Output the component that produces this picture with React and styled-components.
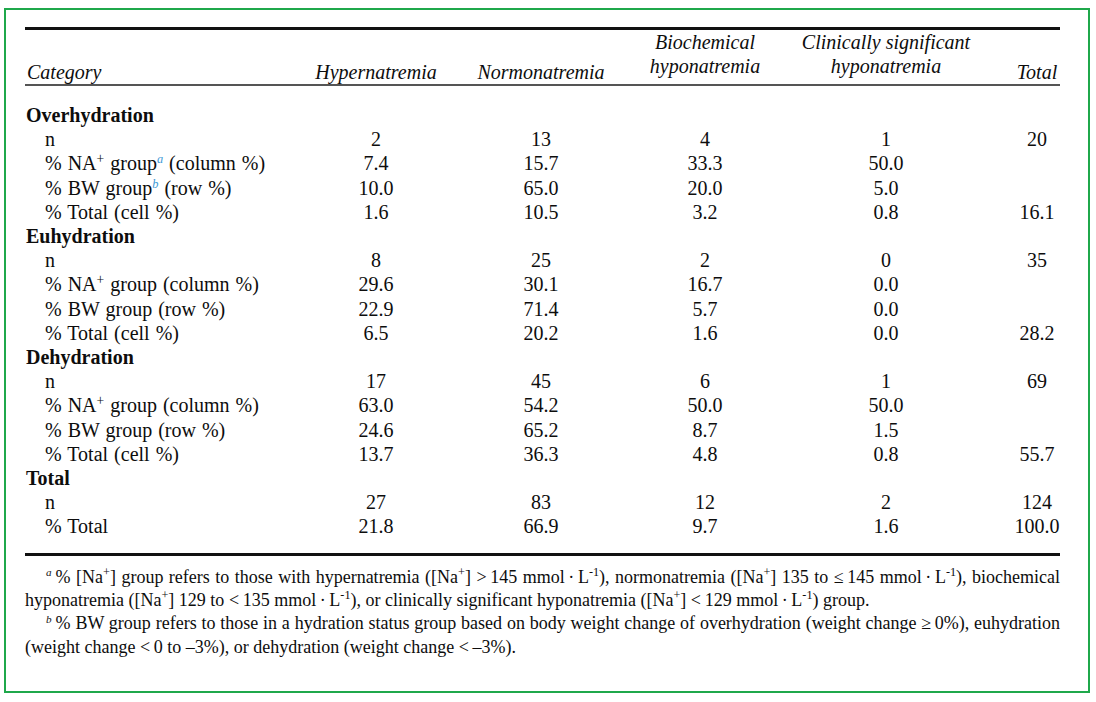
import React from "react";
import styled, { createGlobalStyle } from "styled-components";

const GlobalStyle = createGlobalStyle`
  html, body { margin: 0; padding: 0; background: #ffffff; }
  body { font-family: "Liberation Serif", "Times New Roman", serif; color: #0d0d0d; }
`;

const Frame = styled.div`
  box-sizing: border-box;
  margin: 8px 0 0 4px;
  width: 1086px;
  height: 685px;
  border: 2px solid #1fa84b;
  padding: 17px 28px 0 19px;
  font-family: "Liberation Serif", "Times New Roman", serif;
  color: #0d0d0d;
`;

const Table = styled.table`
  width: 100%;
  table-layout: fixed;
  border-collapse: separate;
  border-spacing: 0;
  border-top: 3px solid #111;
  border-bottom: 3px solid #111;
  font-size: 20px;
`;

const Col = styled.col`
  width: ${(p) => p.$w}px;
`;

const HeadCell = styled.th`
  height: 54px;
  box-sizing: border-box;
  padding: 0 0 ${(p) => (p.$stacked ? 6 : 0)}px ${(p) => (p.$pl || 0)}px;
  vertical-align: bottom;
  text-align: ${(p) => (p.$left ? "left" : "center")};
  font-style: italic;
  font-weight: normal;
  line-height: 24px;
  border-bottom: 2px solid #555;
  white-space: nowrap;
`;

const LabelCell = styled.td`
  padding: ${(p) => (p.$first ? 17 : 0)}px 0 ${(p) => (p.$last ? 14 : 0)}px
    ${(p) => (p.$group ? 1 : 20)}px;
  line-height: 24.2px;
  font-weight: ${(p) => (p.$group ? "bold" : "normal")};
  word-spacing: ${(p) => (p.$group ? 0 : 1)}px;
  white-space: nowrap;
  text-align: left;
`;

const ValueCell = styled.td`
  padding: ${(p) => (p.$first ? 17 : 0)}px 0 ${(p) => (p.$last ? 14 : 0)}px
    ${(p) => (p.$pl || 0)}px;
  line-height: 24.2px;
  text-align: center;
  white-space: nowrap;
`;

const Sup = styled.sup`
  font-size: 0.68em;
  line-height: 0;
  vertical-align: 0.55em;
`;

const Marker = styled.sup`
  font-size: 0.62em;
  line-height: 0;
  vertical-align: 0.6em;
  font-style: italic;
  color: ${(p) => (p.$blue ? "#3d9ad6" : "#141414")};
  margin-right: ${(p) => (p.$gap ? "4px" : "0")};
`;

const Notes = styled.div`
  margin-top: 10px;
  font-size: 18px;
  line-height: 23.3px;
  text-align: justify;
`;

const Note = styled.p`
  margin: 0;
  text-indent: 21px;
`;

const columns = [275, 152, 178, 150, 212, 68];

const Na = () => (
  <>
    [Na<Sup>+</Sup>]
  </>
);

const Unit = () => (
  <>
    mmol{"\u2009·\u2009"}L<Sup>-1</Sup>
  </>
);

const labelFor = (kind, marked) => {
  switch (kind) {
    case "n":
      return "n";
    case "na":
      return (
        <>
          % NA<Sup>+</Sup> group{marked && <Marker $blue>a</Marker>} (column %)
        </>
      );
    case "bw":
      return (
        <>
          % BW group{marked && <Marker $blue>b</Marker>} (row %)
        </>
      );
    case "cell":
      return "% Total (cell %)";
    default:
      return "% Total";
  }
};

const groups = [
  {
    name: "Overhydration",
    rows: [
      ["n", "2", "13", "4", "1", "20"],
      ["na", "7.4", "15.7", "33.3", "50.0", ""],
      ["bw", "10.0", "65.0", "20.0", "5.0", ""],
      ["cell", "1.6", "10.5", "3.2", "0.8", "16.1"],
    ],
  },
  {
    name: "Euhydration",
    rows: [
      ["n", "8", "25", "2", "0", "35"],
      ["na", "29.6", "30.1", "16.7", "0.0", ""],
      ["bw", "22.9", "71.4", "5.7", "0.0", ""],
      ["cell", "6.5", "20.2", "1.6", "0.0", "28.2"],
    ],
  },
  {
    name: "Dehydration",
    rows: [
      ["n", "17", "45", "6", "1", "69"],
      ["na", "63.0", "54.2", "50.0", "50.0", ""],
      ["bw", "24.6", "65.2", "8.7", "1.5", ""],
      ["cell", "13.7", "36.3", "4.8", "0.8", "55.7"],
    ],
  },
  {
    name: "Total",
    rows: [
      ["n", "27", "83", "12", "2", "124"],
      ["total", "21.8", "66.9", "9.7", "1.6", "100.0"],
    ],
  },
];

export default function App() {
  const bodyRows = [];
  groups.forEach((g, gi) => {
    bodyRows.push({ type: "group", name: g.name, key: `g${gi}` });
    g.rows.forEach((r, ri) =>
      bodyRows.push({ type: "row", data: r, marked: gi === 0, key: `r${gi}-${ri}` })
    );
  });

  return (
    <>
      <GlobalStyle />
      <Frame>
        <Table>
          <colgroup>
            {columns.map((w, i) => (
              <Col key={i} $w={w} />
            ))}
          </colgroup>
          <thead>
            <tr>
              <HeadCell $left $pl={2}>Category</HeadCell>
              <HeadCell>Hypernatremia</HeadCell>
              <HeadCell>Normonatremia</HeadCell>
              <HeadCell $stacked>
                Biochemical
                <br />
                hyponatremia
              </HeadCell>
              <HeadCell $stacked>
                Clinically significant
                <br />
                hyponatremia
              </HeadCell>
              <HeadCell $pl={22}>Total</HeadCell>
            </tr>
          </thead>
          <tbody>
            {bodyRows.map((row, i) => {
              const first = i === 0;
              const last = i === bodyRows.length - 1;
              if (row.type === "group") {
                return (
                  <tr key={row.key}>
                    <LabelCell $group $first={first} $last={last} colSpan={6}>
                      {row.name}
                    </LabelCell>
                  </tr>
                );
              }
              const [kind, ...vals] = row.data;
              return (
                <tr key={row.key}>
                  <LabelCell $first={first} $last={last}>
                    {labelFor(kind, row.marked)}
                  </LabelCell>
                  {vals.map((v, vi) => (
                    <ValueCell key={vi} $first={first} $last={last} $pl={vi === 4 ? 22 : 0}>
                      {v}
                    </ValueCell>
                  ))}
                </tr>
              );
            })}
          </tbody>
        </Table>
        <Notes>
          <Note>
            <Marker $gap>a</Marker>% <Na /> group refers to those with hypernatremia (<Na />{" "}
            {">\u2009"}145 <Unit />), normonatremia (<Na /> 135 to {"\u2264\u2009"}145 <Unit />),
            biochemical hyponatremia (<Na /> 129 to {"<\u2009"}135 <Unit />), or clinically
            significant hyponatremia (<Na /> {"<\u2009"}129 <Unit />) group.
          </Note>
          <Note>
            <Marker $gap>b</Marker>% BW group refers to those in a hydration status group based on
            body weight change of overhydration (weight change {"\u2265\u2009"}0%), euhydration
            (weight change {"<\u2009"}0 to {"\u2013"}3%), or dehydration (weight change{" "}
            {"<\u2009\u2013"}3%).
          </Note>
        </Notes>
      </Frame>
    </>
  );
}
